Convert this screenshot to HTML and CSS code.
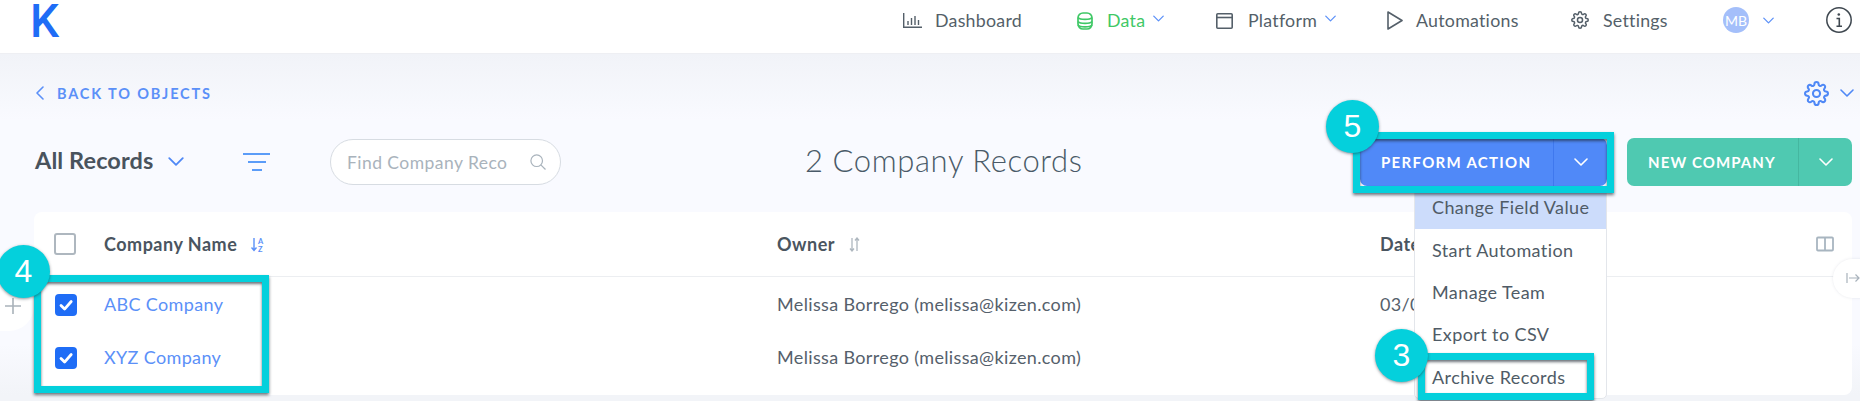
FILE: index.html
```html
<!DOCTYPE html>
<html lang="en">
<head>
<meta charset="utf-8">
<title>Company Records</title>
<link rel="stylesheet" href="styles.css">
</head>
<body>
<svg class="defs" aria-hidden="true">
  <symbol id="chev" viewBox="0 0 14 8"><path d="M1 1l6 6 6-6" fill="none" stroke="currentColor" stroke-width="1.6" stroke-linecap="round" stroke-linejoin="round"/></symbol>
  <symbol id="gear" viewBox="0 0 24 24"><g fill="none" stroke="currentColor" stroke-width="2" stroke-linecap="round" stroke-linejoin="round"><circle cx="12" cy="12" r="3.4"/><path d="M19.4 15a1.65 1.65 0 0 0 .33 1.82l.06.06a2 2 0 0 1 0 2.83 2 2 0 0 1-2.83 0l-.06-.06a1.65 1.65 0 0 0-1.82-.33 1.65 1.65 0 0 0-1 1.51V21a2 2 0 0 1-2 2 2 2 0 0 1-2-2v-.09A1.65 1.65 0 0 0 9 19.4a1.65 1.65 0 0 0-1.82.33l-.06.06a2 2 0 0 1-2.83 0 2 2 0 0 1 0-2.83l.06-.06a1.65 1.65 0 0 0 .33-1.82 1.65 1.65 0 0 0-1.51-1H3a2 2 0 0 1-2-2 2 2 0 0 1 2-2h.09A1.65 1.65 0 0 0 4.6 9a1.65 1.65 0 0 0-.33-1.82l-.06-.06a2 2 0 0 1 0-2.83 2 2 0 0 1 2.83 0l.06.06a1.65 1.65 0 0 0 1.82.33H9a1.65 1.65 0 0 0 1-1.51V3a2 2 0 0 1 2-2 2 2 0 0 1 2 2v.09a1.65 1.65 0 0 0 1 1.51 1.65 1.65 0 0 0 1.82-.33l.06-.06a2 2 0 0 1 2.83 0 2 2 0 0 1 0 2.83l-.06.06a1.65 1.65 0 0 0-.33 1.82V9a1.65 1.65 0 0 0 1.51 1H21a2 2 0 0 1 2 2 2 2 0 0 1-2 2h-.09a1.65 1.65 0 0 0-1.51 1z"/></g></symbol>
  <symbol id="check" viewBox="0 0 22 22"><path d="M6 11.5l3.6 3.6L16.2 7.5" fill="none" stroke="#fff" stroke-width="2.8" stroke-linecap="round" stroke-linejoin="round"/></symbol>
</svg>

<header class="topbar">
  <a class="logo">K</a>
  <nav class="nav">
    <div class="nav-item">
      <svg class="ic-dash" viewBox="0 0 19 15"><path d="M.7 0v14.200H19M5 12V8M8.500 12V5M12 12V3M15.500 12V7" fill="none" stroke="currentColor" stroke-width="1.400"/></svg>
      <span class="nav-text">Dashboard</span>
    </div>
    <div class="nav-item nav-active">
      <svg class="ic-data" viewBox="0 0 16 18"><g fill="none" stroke="currentColor" stroke-width="1.700"><rect x="1" y="1" width="14" height="16" rx="5"/><path d="M1 5.500c2 2.500 12 2.500 14 0M1 9.500c2 2.500 12 2.500 14 0M1 13c2 2.500 12 2.500 14 0"/></g></svg>
      <span class="nav-text">Data</span>
      <svg class="nav-chev"><use href="#chev"/></svg>
    </div>
    <div class="nav-item">
      <svg class="ic-plat" viewBox="0 0 17 16"><g fill="none" stroke="currentColor" stroke-width="1.600"><rect x=".8" y=".8" width="15.400" height="14.400" rx="1"/><path d="M.8 4.500h15.400"/></g></svg>
      <span class="nav-text">Platform</span>
      <svg class="nav-chev"><use href="#chev"/></svg>
    </div>
    <div class="nav-item">
      <svg class="ic-play" viewBox="0 0 16 19"><path d="M1 1l14 8.500L1 18z" fill="none" stroke="currentColor" stroke-width="1.600" stroke-linejoin="round"/></svg>
      <span class="nav-text">Automations</span>
    </div>
    <div class="nav-item">
      <svg class="ic-gear"><use href="#gear"/></svg>
      <span class="nav-text">Settings</span>
    </div>
    <div class="nav-item nav-user">
      <span class="avatar">MB</span>
      <svg class="nav-chev"><use href="#chev"/></svg>
    </div>
    <div class="nav-item">
      <svg class="ic-info" viewBox="0 0 26 26"><circle cx="13" cy="13" r="12.200" fill="none" stroke="currentColor" stroke-width="1.500"/><path d="M10.500 11.500H13.300V19M10.500 19.300H16" fill="none" stroke="currentColor" stroke-width="1.600"/><circle cx="12.800" cy="7.500" r="1.300" fill="currentColor"/></svg>
    </div>
  </nav>
</header>

<main class="page">
  <div class="back-row">
    <a class="back">
      <svg class="back-chev" viewBox="0 0 8 14"><path d="M7 1L1 7l6 6" fill="none" stroke="currentColor" stroke-width="1.600" stroke-linecap="round" stroke-linejoin="round"/></svg>
      <span>BACK TO OBJECTS</span>
    </a>
    <div class="settings">
      <svg class="settings-gear"><use href="#gear"/></svg>
      <svg class="settings-chev"><use href="#chev"/></svg>
    </div>
  </div>

  <div class="toolbar">
    <div class="views">
      <span class="views-name">All Records</span>
      <svg class="views-chev"><use href="#chev"/></svg>
    </div>
    <div class="filter"><i class="f1"></i><i class="f2"></i><i class="f3"></i></div>
    <div class="search">
      <span class="search-text">Find Company Reco</span>
      <svg class="search-icon" viewBox="0 0 16 16"><g fill="none" stroke="currentColor" stroke-width="1.200"><circle cx="6.700" cy="6.700" r="5.800"/><path d="M10.800 10.800L15.500 15.500"/></g></svg>
    </div>
    <h1 class="title">2 Company Records</h1>
    <div class="btn btn-blue">
      <span class="btn-label">PERFORM ACTION</span>
      <span class="btn-drop"><svg class="btn-chev"><use href="#chev"/></svg></span>
    </div>
    <div class="btn btn-green">
      <span class="btn-label">NEW COMPANY</span>
      <span class="btn-drop"><svg class="btn-chev"><use href="#chev"/></svg></span>
    </div>
  </div>

  <section class="table">
    <div class="row row-head">
      <span class="box"></span>
      <span class="th">Company Name
        <svg class="sort" viewBox="0 0 15 15"><path d="M3 1v12M.5 10.500L3 13.500l2.500-3" fill="none" stroke="currentColor" stroke-width="1.400"/><text x="7" y="6.500" class="sort-t">A</text><text x="7" y="14.500" class="sort-t">Z</text></svg>
      </span>
      <span class="th">Owner
        <svg class="sort sort-off" viewBox="0 0 11 15"><path d="M3 1v13M1 11.500L3 14l2-2.500M8 14V1M6 3.500L8 1l2 2.500" fill="none" stroke="currentColor" stroke-width="1.300"/></svg>
      </span>
      <span class="th">Date</span>
      <svg class="cols" viewBox="0 0 18 16"><g fill="none" stroke="currentColor" stroke-width="1.800"><rect x="1" y="1.500" width="16" height="13" rx="1"/><path d="M9 1.500v13"/></g></svg>
    </div>
    <div class="row">
      <span class="box box-on"><svg class="tick"><use href="#check"/></svg></span>
      <a class="link">ABC Company</a>
      <span class="td">Melissa Borrego (melissa@kizen.com)</span>
      <span class="td">03/0</span>
    </div>
    <div class="row">
      <span class="box box-on"><svg class="tick"><use href="#check"/></svg></span>
      <a class="link">XYZ Company</a>
      <span class="td">Melissa Borrego (melissa@kizen.com)</span>
    </div>
  </section>
</main>

<div class="add-tab"><svg class="add-plus" viewBox="0 0 16 16"><path d="M8 0v16M0 8h16" stroke="currentColor" stroke-width="1.600" fill="none"/></svg></div>
<div class="expand-tab"><svg class="expand-icon" viewBox="0 0 14 12"><path d="M1 1v10M3 6h10M9.500 2.500L13 6l-3.500 3.500" fill="none" stroke="currentColor" stroke-width="1.200"/></svg></div>

<ul class="menu">
  <li class="menu-item menu-hi">Change Field Value</li>
  <li class="menu-item">Start Automation</li>
  <li class="menu-item">Manage Team</li>
  <li class="menu-item">Export to CSV</li>
  <li class="menu-item">Archive Records</li>
</ul>

<div class="mark mark-action"></div>
<div class="mark mark-rows"></div>
<div class="mark mark-archive"></div>
<div class="badge badge-5">5</div>
<div class="badge badge-4">4</div>
<div class="badge badge-3">3</div>
</body>
</html>
```

FILE: styles.css
```css
* { box-sizing: border-box; }
html, body { margin: 0; padding: 0; }
body {
  width: 1860px;
  height: 401px;
  position: relative;
  overflow: hidden;
  font-family: "Lato", "Liberation Sans", sans-serif;
  color: #4a5660;
  background: #f9faff;
}
.defs { position: absolute; width: 0; height: 0; }
svg { display: block; flex: none; }

/* top bar */
.topbar {
  height: 54px;
  background: #fff;
  border-bottom: 1px solid #eeeff3;
  display: flex;
  align-items: flex-start;
  justify-content: space-between;
  padding-left: 30px;
}
.logo {
  font-family: "Roboto", "Liberation Sans", sans-serif;
  font-weight: 500;
  font-size: 46px;
  line-height: 42px;
  color: #1f6df6;
}
.nav {
  display: grid;
  grid-template-columns: 174px 139px 171px 184px 152px 103px 34px;
  height: 40px;
  align-items: center;
}
.nav-item { display: flex; align-items: center; color: #545f69; }
.nav-text { font-size: 17.8px; letter-spacing: .25px; line-height: 20px; }
.nav-active { color: #3fc866; }
.nav-chev { width: 11px; height: 7px; color: #5b90f8; margin-left: 8px; margin-top: -4px; }
.nav-user .nav-chev { margin-left: 14px; margin-top: 0; }
.ic-dash { width: 19px; height: 15px; margin-right: 13px; }
.ic-data { width: 16px; height: 18px; margin-right: 14px; margin-top: 2px; }
.ic-plat { width: 17px; height: 16px; margin-right: 15px; margin-top: 1px; }
.ic-play { width: 16px; height: 19px; margin-right: 13px; }
.ic-gear { width: 18px; height: 18px; margin-right: 14px; }
.avatar {
  width: 26px; height: 26px; border-radius: 50%;
  background: #a4bffa; color: #fff;
  font-size: 14px; display: flex; align-items: center; justify-content: center;
}
.ic-info { width: 26px; height: 26px; color: #3f4850; }

/* page */
.page {
  height: 347px;
  padding-top: 25px;
  background: linear-gradient(#f1f3f8 0, #f9faff 66px, #f9faff 290px, #f2f4f8 341px);
}
.back-row {
  display: flex;
  justify-content: space-between;
  align-items: center;
  height: 28px;
  padding: 0 6px 0 36px;
}
.back { display: flex; align-items: center; color: #5b90f8; }
.back-chev { width: 8px; height: 14px; margin-right: 13px; }
.back span { font-size: 14.5px; font-weight: 700; letter-spacing: 1.85px; }
.settings { display: flex; align-items: center; gap: 11px; color: #4f88f6; }
.settings-gear { width: 25px; height: 25px; }
.settings-chev { width: 14px; height: 8px; }

.toolbar {
  margin-top: 31px;
  display: grid;
  grid-template-columns: 208px 87px 475px 555px 267px 225px;
  padding-left: 35px;
  height: 48px;
  align-items: center;
}
.views { display: flex; align-items: center; padding-bottom: 4px; }
.views-name { font-size: 23.5px; font-weight: 700; letter-spacing: .1px; color: #49535d; }
.views-chev { width: 16px; height: 9px; color: #4f88f6; margin-left: 15px; margin-top: 2px; }
.filter { display: flex; flex-direction: column; align-items: center; gap: 6px; width: 27px; }
.filter i { display: block; height: 2px; background: #5b9cf8; }
.f1 { width: 27px; }
.f2 { width: 18px; }
.f3 { width: 10px; }
.search {
  width: 231px;
  height: 46px;
  border: 1px solid #d7dce2;
  border-radius: 23px;
  background: #fff;
  display: flex;
  align-items: center;
  padding: 0 14px 0 16px;
  justify-content: space-between;
}
.search-text { font-size: 17.5px; color: #a9b3bc; letter-spacing: .45px; white-space: nowrap; }
.search-icon { width: 16px; height: 16px; color: #a9b3bc; }
.title { margin: 0; padding-bottom: 4px; font-size: 31px; font-weight: 300; letter-spacing: .6px; color: #4a5a68; white-space: nowrap; }
.btn {
  height: 48px;
  border-radius: 7px;
  display: flex;
  align-items: center;
  color: #fff;
}
.btn-blue { width: 247px; background: #5089f8; }
.btn-green { width: 225px; background: #4fc9b1; }
.btn-label { flex: 1; padding-left: 21px; font-size: 15px; font-weight: 700; letter-spacing: 1.3px; white-space: nowrap; }
.btn-green .btn-label { padding-left: 21px; letter-spacing: 1.1px; }
.btn-drop {
  width: 54px; height: 48px;
  display: flex; align-items: center; justify-content: center;
  border-left: 1px solid #3f78ee;
}
.btn-green .btn-drop { border-left-color: #45b7a0; }
.btn-chev { width: 14px; height: 8px; }

/* table */
.table {
  margin: 26px 8px 0 34px;
  height: 183px;
  background: #fff;
  border-radius: 8px;
  overflow: hidden;
}
.row {
  display: grid;
  grid-template-columns: 50px 673px 603px 1fr auto;
  align-items: center;
  height: 53px;
  padding: 0 18px 0 20px;
  font-size: 18px;
}
.row-head {
  height: 65px;
  border-bottom: 1px solid #eceef1;
  margin-bottom: 1px;
}
.box {
  width: 22px; height: 22px;
  border: 2px solid #aeb7bf;
  border-radius: 3px;
  background: #fff;
}
.box-on { background: #1f6df6; border: 0; border-radius: 4px; margin-left: 1px; }
.tick { width: 22px; height: 22px; }
.th { display: flex; align-items: center; font-size: 18px; font-weight: 700; color: #4a5560; letter-spacing: .5px; white-space: nowrap; }
.td { color: #55606b; letter-spacing: .35px; white-space: nowrap; padding-bottom: 2px; }
.link { color: #5b90f8; letter-spacing: .35px; padding-bottom: 2px; }
.sort { width: 15px; height: 15px; margin-left: 14px; color: #5b90f8; }
.sort-off { width: 11px; color: #aeb7bf; }
.sort-t { font-size: 7.5px; font-weight: 700; fill: currentColor; }
.cols { width: 18px; height: 16px; color: #a8b5c0; }

/* overlays */
.add-tab {
  position: absolute; left: -30px; top: 280px;
  width: 64px; height: 51px;
  background: #fff;
  border-radius: 0 25px 25px 0;
  display: flex; align-items: center; justify-content: flex-end;
  padding-right: 13px;
  color: #a9b2ba;
}
.add-plus { width: 16px; height: 16px; }
.expand-tab {
  position: absolute; left: 1833px; top: 259px;
  width: 40px; height: 39px;
  background: #fff;
  border-radius: 20px 0 0 20px;
  box-shadow: 0 0 3px rgba(120,130,150,.18);
  padding: 13px 0 0 13px;
  color: #a8b2bb;
}
.expand-icon { width: 14px; height: 12px; }
.menu {
  position: absolute; left: 1414px; top: 186px;
  width: 193px; height: 213px;
  margin: 0; padding: 0;
  list-style: none;
  background: #fff;
  border: 1px solid #e3e6eb;
  border-radius: 0 0 5px 5px;
}
.menu-item {
  height: 42.4px;
  display: flex; align-items: center;
  padding: 0 0 2px 17px;
  font-size: 18px;
  letter-spacing: .4px;
  color: #4f5b66;
}
.menu-hi { background: #ccdcfb; }
.mark {
  position: absolute;
  border: 7px solid #04d0dc;
  box-shadow: 0 2px 3px rgba(30,40,50,.65), inset 0 2px 3px rgba(30,40,50,.65);
}
.mark-action { left: 1353px; top: 132px; width: 261px; height: 61px; }
.mark-rows { left: 34px; top: 275px; width: 235px; height: 118px; }
.mark-archive { left: 1418px; top: 353px; width: 176px; height: 47px; }
.badge {
  position: absolute;
  width: 53px; height: 53px;
  border-radius: 50%;
  background: #04d0dc;
  color: #fff;
  font-family: "Liberation Sans", sans-serif;
  font-size: 32px;
  display: flex; align-items: center; justify-content: center;
  box-shadow: 0 1px 3px rgba(30,40,50,.5);
}
.badge-5 { left: 1326px; top: 100px; }
.badge-4 { left: -3px; top: 245px; }
.badge-3 { left: 1375px; top: 329px; }
```
